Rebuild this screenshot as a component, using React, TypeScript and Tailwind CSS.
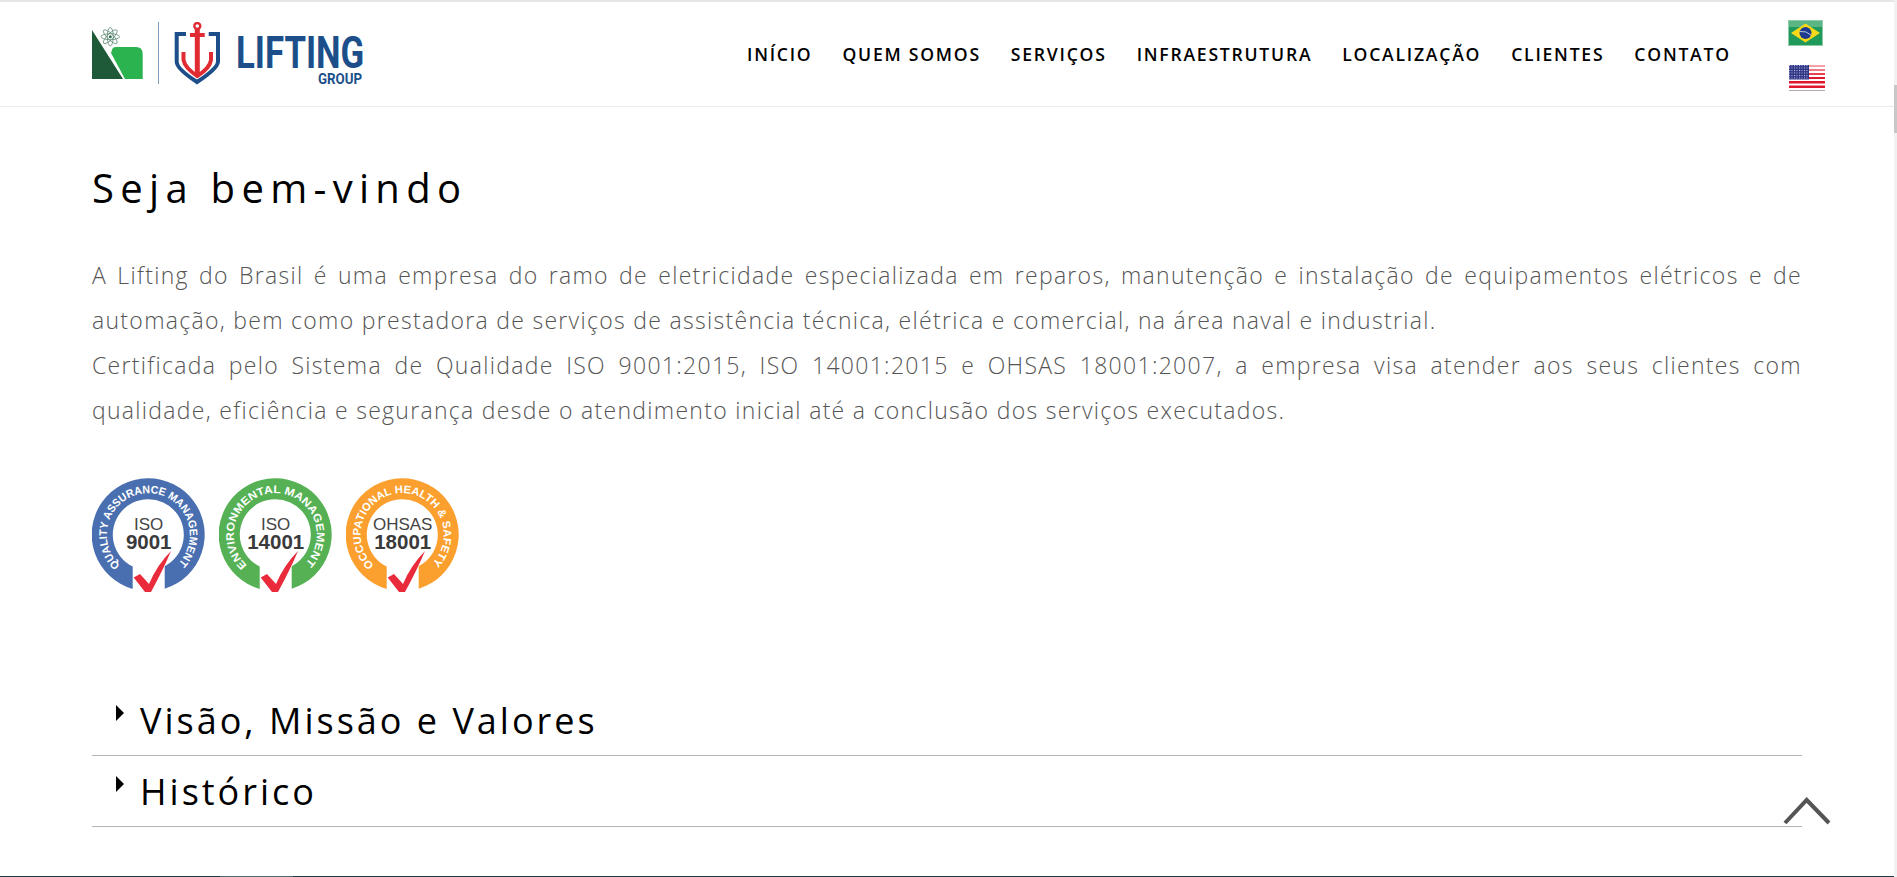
import React from 'react';

const NAV = ['INÍCIO', 'QUEM SOMOS', 'SERVIÇOS', 'INFRAESTRUTURA', 'LOCALIZAÇÃO', 'CLIENTES', 'CONTATO'];

const Logo = () => (
  <div className="h-[62px] w-[270px] relative">
    <svg width="270" height="64" viewBox="0 0 270 64">
      <polygon points="0,8 0,57 31,57" fill="#1f5a38" />
      <path d="M20 28 Q20.5 25 24 25 L44 25 Q50.7 25 50.7 32 L50.7 57 L33 57 L19 31 Z" fill="#2bb34f" />
      <g fill="none" stroke="#5f8a75" strokeWidth="0.8">
        <ellipse cx="18.3" cy="14.7" rx="9.3" ry="3" />
        <ellipse cx="18.3" cy="14.7" rx="9.3" ry="3" transform="rotate(45 18.3 14.7)" />
        <ellipse cx="18.3" cy="14.7" rx="9.3" ry="3" transform="rotate(90 18.3 14.7)" />
        <ellipse cx="18.3" cy="14.7" rx="9.3" ry="3" transform="rotate(135 18.3 14.7)" />
      </g>
      <circle cx="18.3" cy="14.7" r="1.5" fill="#2f6a50" />
      <line x1="66.5" y1="0" x2="66.5" y2="62" stroke="#7c9cba" strokeWidth="1" />
      <path d="M94 12 L84.7 12 L84.7 40 Q85 47 105 60 Q125 47 126 40 L126 12 L116.7 12" fill="none" stroke="#1c4f8a" strokeWidth="4" />
      <path d="M105.3 7 L105.3 54" fill="none" stroke="#e02b33" strokeWidth="5" />
      <path d="M98 13 L112.7 13 M91.5 30 L91.5 38 Q93 46 105.3 54 Q118 46 119 38 L119 30" fill="none" stroke="#e02b33" strokeWidth="4" />
      <circle cx="105.3" cy="4" r="3" fill="none" stroke="#e02b33" strokeWidth="2.4" />
    </svg>
    <span className="absolute left-[144px] top-[9px] text-[44px] leading-[44px] font-bold text-[#1c4f8a] font-['Roboto',sans-serif] scale-x-[0.79] origin-left whitespace-nowrap">LIFTING</span>
    <span className="absolute left-[226px] top-[50px] text-[14px] leading-[14px] font-bold text-[#1c4f8a] font-['Roboto',sans-serif] scale-x-[0.95] origin-left">GROUP</span>
  </div>
);

const BrazilFlag = () => (
  <svg width="35" height="26" viewBox="0 0 35 26">
    <rect width="35" height="26" fill="#1f9a5a" />
    <rect width="35" height="7" fill="#5cb585" />
    <rect x="0.5" y="0.5" width="34" height="25" fill="none" stroke="#8fcca8" />
    <polygon points="17.5,3.5 32,13 17.5,22.5 3,13" fill="#f7d917" />
    <circle cx="17.5" cy="13" r="6" fill="#1d3a8f" />
    <path d="M11.8 11.5 Q18 10.5 23 15" fill="none" stroke="#dfe6f5" strokeWidth="0.8" />
  </svg>
);

const UsFlag = () => (
  <svg width="36" height="26" viewBox="0 0 36 26">
    <defs>
      <pattern id="stars" width="2.5" height="2.5" patternUnits="userSpaceOnUse">
        <rect width="2.5" height="2.5" fill="#2f3585" />
        <rect width="1" height="1" fill="#c5c8e6" />
      </pattern>
    </defs>
    <rect width="36" height="26" fill="#fff" />
    <rect width="36" height="2" fill="#f4a0a8" />
    <rect y="4" width="36" height="2" fill="#ee7a85" />
    <rect y="8" width="36" height="2" fill="#e8404f" />
    <rect y="12" width="36" height="2" fill="#e0182d" />
    <rect y="16" width="36" height="2.5" fill="#e0182d" />
    <rect y="20.5" width="36" height="2.5" fill="#e0182d" />
    <rect y="25" width="36" height="1" fill="#b8a8a8" />
    <rect width="20" height="14.5" fill="url(#stars)" />
  </svg>
);

const Seal = ({ color, line1, line2, ring }: { color: string; line1: string; line2: string; ring: string }) => {
  const id = `arc-${line2}`;
  return (
    <svg width="113" height="114" viewBox="0 0 113 114">
      <defs>
        <path id={id} d="M 28.7 87.7 A 41.5 41.5 0 1 1 85.8 85.8" />
      </defs>
      <path d="M40.7 111 A56.5 56.5 0 1 1 72.7 110.7 L72.7 88.2 A35.5 35.5 0 1 0 40.7 88.6 Z" fill={color} />
      <text fill="#fff" fontSize="11" fontWeight="700" fontFamily="'Liberation Sans', sans-serif">
        <textPath href={`#${id}`} startOffset="50%" textAnchor="middle" textLength={196} lengthAdjust="spacingAndGlyphs">{ring}</textPath>
      </text>
      <text x="56.7" y="51.5" textAnchor="middle" fontSize="17" fill="#444" fontFamily="'Liberation Sans', sans-serif">{line1}</text>
      <text x="56.7" y="70.5" textAnchor="middle" fontSize="20.5" fontWeight="700" fill="#3a3a3a" fontFamily="'Liberation Sans', sans-serif">{line2}</text>
      <path d="M41.7 99.5 L48 96 L57 106 Q65 87 79 73 Q71 92 59 114 L53 114 Z" fill="#ea2b3b" />
    </svg>
  );
};

const Accordion = ({ title }: { title: string }) => (
  <div className="h-[71px] border-b border-[#b4b4b4] flex items-center relative">
    <span className="absolute left-[24px] top-[20px] w-0 h-0 border-y-[8px] border-y-transparent border-l-[8px] border-l-black" />
    <h3 className="pl-[48px] text-[36px] leading-[50px] tracking-[3px] text-black font-normal mt-[2px]">{title}</h3>
  </div>
);

export default function App() {
  return (
    <div className="h-[877px] overflow-hidden bg-white font-['Open_Sans',sans-serif] flex flex-col relative">
      <div className="flex-1 flex flex-col min-h-0 pr-[3px]">
        <header className="h-[107px] flex-none border-t-2 border-[#e6e6e6] border-b border-b-[#ececec] pl-[92px] pr-[69px] flex items-start">
          <div className="mt-[20px]">
            <Logo />
          </div>
          <nav className="flex gap-[30px] ml-[385px] mt-[40px] text-[17.6px] leading-[24px] font-semibold tracking-[1.76px] text-black whitespace-nowrap">
            {NAV.map((n) => <a key={n}>{n}</a>)}
          </nav>
          <div className="flex flex-col ml-auto mt-[18px] gap-[19px]">
            <BrazilFlag />
            <div className="ml-px">
              <UsFlag />
            </div>
          </div>
        </header>
        <main className="pl-[92px] pr-[92px]">
          <h1 className="mt-[53px] text-[40px] leading-[55px] tracking-[6.3px] text-black font-normal">Seja bem-vindo</h1>
          <div className="mt-[38px] text-[23px] leading-[45px] tracking-[1.3px] font-light text-[#555] text-justify">
            <p>A Lifting do Brasil é uma empresa do ramo de eletricidade especializada em reparos, manutenção e instalação de equipamentos elétricos e de automação, bem como prestadora de serviços de assistência técnica, elétrica e comercial, na área naval e industrial.</p>
            <p>Certificada pelo Sistema de Qualidade ISO 9001:2015, ISO 14001:2015 e OHSAS 18001:2007, a empresa visa atender aos seus clientes com qualidade, eficiência e segurança desde o atendimento inicial até a conclusão dos serviços executados.</p>
          </div>
          <div className="flex gap-[14px] mt-[45px] h-[113px]">
            <Seal color="#4a6fb0" ring="QUALITY ASSURANCE MANAGEMENT" line1="ISO" line2="9001" />
            <Seal color="#55b154" ring="ENVIRONMENTAL MANAGEMENT" line1="ISO" line2="14001" />
            <Seal color="#fb9f2f" ring="OCCUPATIONAL HEALTH & SAFETY" line1="OHSAS" line2="18001" />
          </div>
          <div className="mt-[94px]">
            <Accordion title="Visão, Missão e Valores" />
            <Accordion title="Histórico" />
          </div>
        </main>
      </div>
      <div className="h-px flex-none bg-[#1d3a44] flex">
        <div className="ml-[220px] w-[73px] bg-[#4d6a70]" />
      </div>
      <div className="absolute right-0 top-0 bottom-0 w-[3px] bg-[#f1f1f1]">
        <div className="mt-[85px] h-[48px] bg-[#c8c8c8]" />
      </div>
      <svg className="absolute left-[1782px] top-[797px]" width="50" height="30" viewBox="0 0 50 30">
        <path d="M3 26 L24.7 3 L47 26" fill="none" stroke="#555" strokeWidth="4" />
      </svg>
    </div>
  );
}
